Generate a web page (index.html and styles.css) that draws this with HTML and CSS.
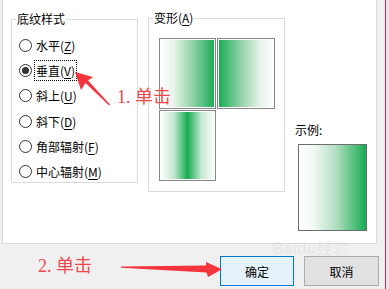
FILE: index.html
```html
<!DOCTYPE html>
<html lang="zh">
<head>
<meta charset="utf-8">
<title>底纹样式</title>
<link rel="stylesheet" href="styles.css">
</head>
<body>
<div class="window">
  <div class="main">
    <div class="panel">
      <div class="group styles">
        <div class="legend">底纹样式</div>
        <div class="radios">
          <div class="radio"><span class="dot"></span><span class="lbl">水平(<u>Z</u>)</span></div>
          <div class="radio checked"><span class="dot"></span><span class="lbl focus">垂直(<u>V</u>)</span></div>
          <div class="radio"><span class="dot"></span><span class="lbl">斜上(<u>U</u>)</span></div>
          <div class="radio"><span class="dot"></span><span class="lbl">斜下(<u>D</u>)</span></div>
          <div class="radio"><span class="dot"></span><span class="lbl">角部辐射(<u>F</u>)</span></div>
          <div class="radio"><span class="dot"></span><span class="lbl">中心辐射(<u>M</u>)</span></div>
        </div>
      </div>
      <div class="group variants">
        <div class="legend">变形(<u>A</u>)</div>
        <div class="swatches">
          <div class="swatch sw-right"></div>
          <div class="swatch sw-left"></div>
          <div class="swatch sw-center"></div>
        </div>
      </div>
      <div class="sample">
        <div class="sample-label">示例:</div>
        <div class="sample-box"></div>
      </div>
    </div>
    <div class="buttons">
      <button class="btn primary">确定</button>
      <button class="btn">取消</button>
    </div>
  </div>
  <div class="redline"></div>
  <div class="edge"></div>

  <div class="watermark">Baidu经验</div>

  <div class="ann ann1">1. 单击</div>
  <div class="ann ann2">2. 单击</div>
  <svg class="arrows" width="389" height="289" viewBox="0 0 389 289">
    <polygon points="75,72 93,77 88,80.5 110,104.5 109,105.5 85.5,83 81,90" fill="#f5353c"/>
    <polygon points="121,266.6 206,265.5 206,262 222,269.3 208,277 206.5,272.5 121,267.8" fill="#f5353c"/>
  </svg>
</div>
</body>
</html>
```

FILE: styles.css
```css
* { box-sizing: border-box; }

body {
  margin: 0;
  background: #f0f0f0;
  font-family: "Noto Sans CJK SC", "Noto Sans", sans-serif;
  font-size: 12px;
  color: #000;
}

.window {
  position: relative;
  display: flex;
  width: 389px;
  height: 289px;
  overflow: hidden;
}

.main {
  width: 385px;
  display: flex;
  flex-direction: column;
}

.redline {
  width: 1px;
  background: #d4245a;
}

.edge {
  flex: 1;
  background: #e6e6e6;
}

.panel {
  margin-left: 2px;
  width: 375px;
  height: 244px;
  background: #fff;
  border: 1px solid #d9d9d9;
  border-top: none;
  display: flex;
  align-items: flex-start;
  padding-left: 8px;
}

.group {
  border: 1px solid #dcdcdc;
}

.styles {
  margin-top: 19px;
  width: 127px;
  height: 164px;
}

.variants {
  margin-top: 18px;
  margin-left: 10px;
  width: 137px;
  height: 174px;
}

.legend {
  margin-top: -9px;
  margin-left: 4px;
  padding: 0 1px;
  width: fit-content;
  background: #fff;
  line-height: 16px;
  height: 16px;
}

.radios {
  padding-top: 6px;
}

.radio {
  display: flex;
  align-items: center;
  height: 25.2px;
  padding-left: 7px;
}

.dot {
  width: 13px;
  height: 13px;
  border: 1px solid #333;
  border-radius: 50%;
  background: #fff;
  display: flex;
  align-items: center;
  justify-content: center;
  flex: none;
}

.checked .dot::after {
  content: "";
  width: 7px;
  height: 7px;
  border-radius: 50%;
  background: #333;
}

.lbl {
  margin-left: 2px;
  padding: 1px 1px;
  line-height: 17px;
  border: 1px dotted transparent;
  white-space: nowrap;
}

.lbl.focus {
  border-color: #000;
}

u {
  text-decoration: underline;
  text-underline-offset: 2px;
}

.swatches {
  margin-top: 12px;
  margin-left: 10px;
  display: grid;
  grid-template-columns: 57px 58px;
  grid-auto-rows: 71px;
  gap: 1px;
}

.swatch {
  border: 1px solid #878787;
  padding: 1px;
  background-color: #fff;
  background-clip: content-box;
}

.sw-right {
  background-image: linear-gradient(to right, #ffffff 0%, #e6f4ea 25%, #8fd1a7 60%, #17ac52 100%);
}

.sw-left {
  background-image: linear-gradient(to left, #ffffff 0%, #e6f4ea 25%, #8fd1a7 60%, #17ac52 100%);
}

.sw-center {
  background-image: linear-gradient(to right, #ffffff 0%, #c5e7d1 25%, #17ac52 50%, #c5e7d1 75%, #ffffff 100%);
}

.sample {
  margin-left: 10px;
  margin-top: 122px;
}

.sample-label {
  line-height: 16px;
}

.sample-box {
  margin-top: 6px;
  margin-left: 3px;
  width: 69px;
  height: 87px;
  border: 1px solid #6d6d6d;
  background: linear-gradient(to right, #ffffff 0%, #f4faf6 20%, #b3dfc3 55%, #17ac52 100%);
}

.buttons {
  display: flex;
  justify-content: flex-end;
  gap: 10px;
  margin-top: 12px;
  padding-right: 6px;
}

.btn {
  width: 74px;
  height: 30px;
  font-family: "Noto Sans CJK SC", "Noto Sans", sans-serif;
  font-size: 12px;
  color: #000;
  background: #e1e1e1;
  border: 1px solid #adadad;
  padding: 0;
}

.btn + .btn {
  width: 75px;
}

.btn.primary {
  background: #e5f1fb;
  border-color: #0078d7;
}

.ann {
  position: absolute;
  font-family: "Liberation Serif", "Noto Sans CJK SC", serif;
  font-size: 18px;
  line-height: 20px;
  color: #f0474b;
  white-space: nowrap;
}

.ann1 { left: 117px; top: 87px; }
.ann2 { left: 38px; top: 256px; }

.arrows {
  position: absolute;
  left: 0;
  top: 0;
  pointer-events: none;
}

.watermark {
  position: absolute;
  left: 272px;
  top: 240px;
  pointer-events: none;
  color: rgba(0, 0, 0, 0.05);
  font-family: "Liberation Sans", "Noto Sans CJK SC", sans-serif;
  font-size: 16px;
  font-weight: bold;
  line-height: 18px;
}
```
